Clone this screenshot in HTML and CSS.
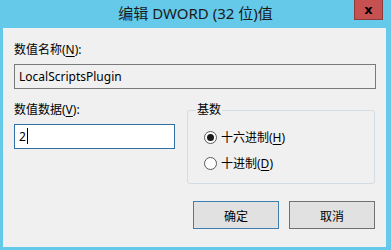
FILE: index.html
```html
<!DOCTYPE html>
<html lang="zh-CN">
<head>
    <meta charset="UTF-8">
    <title>编辑 DWORD (32 位)值</title>
    <link rel="stylesheet" href="styles.css">
</head>
<body>
    <div class="window">
        <div class="titlebar">
            <span></span>
            <div class="title">编辑 DWORD (32 位)值</div>
            <button class="close-btn">x</button>
        </div>

        <div class="client">
            <div class="label">数值名称(<u>N</u>):</div>
            <div class="textbox readonly">LocalScriptsPlugin</div>

            <div class="row">
                <div class="data-col">
                    <div class="label">数值数据(<u>V</u>):</div>
                    <div class="textbox focused">2<span class="caret"></span></div>
                </div>

                <fieldset class="base-group">
                    <legend>基数</legend>
                    <label class="radio-row">
                        <span class="radio checked"></span>
                        <span>十六进制(<u>H</u>)</span>
                    </label>
                    <label class="radio-row">
                        <span class="radio"></span>
                        <span>十进制(<u>D</u>)</span>
                    </label>
                </fieldset>
            </div>

            <div class="buttons">
                <button class="btn default">确定</button>
                <button class="btn">取消</button>
            </div>
        </div>
    </div>
</body>
</html>
```

FILE: styles.css
```css
html, body {
    margin: 0;
    padding: 0;
}
body {
    width: 391px;
    height: 250px;
    overflow: hidden;
    background-color: #65c9ea;
    font-family: "Noto Sans", "Noto Sans CJK SC", sans-serif;
    font-size: 12px;
    color: #000;
}
.window {
    display: flex;
    flex-direction: column;
    height: 250px;
}
.titlebar {
    height: 28px;
    display: grid;
    grid-template-columns: 1fr auto 1fr;
    align-items: start;
}
.title {
    font-family: "Noto Sans", "Noto Sans CJK SC", sans-serif;
    font-size: 15px;
    line-height: 26px;
    color: #1a1a1a;
}
.close-btn {
    justify-self: end;
    margin-right: 8px;
    width: 29px;
    height: 20px;
    padding: 0;
    border: 1px solid #8f3b3b;
    border-top: none;
    background-color: #c75050;
    color: #000;
    font-family: "DejaVu Sans", sans-serif;
    font-weight: bold;
    font-size: 13px;
    line-height: 16px;
}
.client {
    flex: 1;
    margin: 0 5px 3px 3px;
    background-color: #f0f0f0;
    padding: 14px 10px 0 11px;
}
.label {
    line-height: 16px;
    margin-bottom: 6px;
}
u {
    text-decoration-thickness: 1px;
    text-underline-offset: 2px;
}
.textbox {
    height: 25px;
    box-sizing: border-box;
    border: 1px solid #7a7a7a;
    padding: 0 4px;
    line-height: 23px;
}
.textbox.readonly {
    background-color: #f0f0f0;
}
.textbox.focused {
    background-color: #fff;
    border-color: #2f6fa6;
}
.caret {
    display: inline-block;
    width: 1px;
    height: 16px;
    background-color: #000;
    vertical-align: -3px;
    margin-left: 1px;
}
.row {
    display: flex;
    gap: 12px;
    margin-top: 13px;
}
.data-col {
    width: 161px;
}
.base-group {
    width: 188px;
    box-sizing: border-box;
    height: 82px;
    margin: 0;
    padding: 6px 0 0 16px;
    border: 1px solid #d5dbe2;
    border-radius: 3px;
}
.base-group legend {
    padding: 0 1px;
    margin-left: -8px;
    line-height: 16px;
}
.radio-row {
    display: flex;
    align-items: center;
    height: 26px;
    gap: 4px;
}
.radio {
    width: 13px;
    height: 13px;
    box-sizing: border-box;
    border: 1px solid #5a5a5a;
    border-radius: 50%;
    background-color: #fff;
    display: flex;
    align-items: center;
    justify-content: center;
}
.radio.checked::after {
    content: "";
    width: 7px;
    height: 7px;
    border-radius: 50%;
    background-color: #1a1a1a;
}
.buttons {
    display: flex;
    justify-content: flex-end;
    gap: 10px;
    margin-top: 17px;
    padding-right: 1px;
}
.btn {
    width: 86px;
    height: 28px;
    border: 1px solid #707070;
    background-color: #e1e1e1;
    font-family: "Noto Sans CJK SC", sans-serif;
    font-size: 12px;
    color: #000;
    padding: 0;
}
.btn.default {
    border-color: #3c7fb1;
}
```
